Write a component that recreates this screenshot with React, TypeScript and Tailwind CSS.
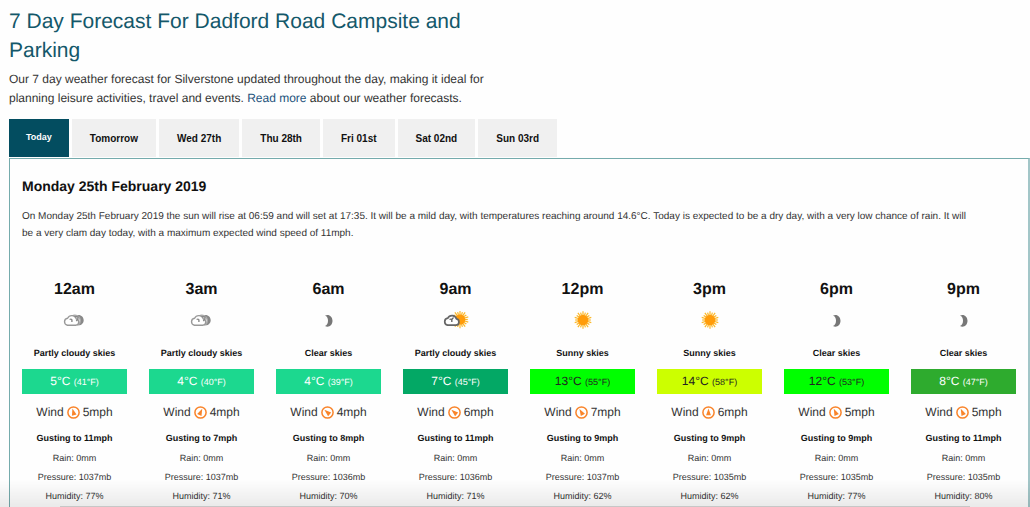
import React, { useState } from 'react';

type Sky = 'cloudNight' | 'moon' | 'cloudSun' | 'sun';

interface HourForecast {
  time: string;
  sky: Sky;
  summary: string;
  celsius: number;
  fahrenheit: number;
  tempClass: string;
  wind: number;
  windAngle: number;
  gust: number;
  pressure: number;
  humidity: number;
}

const tabs = ['Today', 'Tomorrow', 'Wed 27th', 'Thu 28th', 'Fri 01st', 'Sat 02nd', 'Sun 03rd'];

const hours: HourForecast[] = [
  { time: '12am', sky: 'cloudNight', summary: 'Partly cloudy skies', celsius: 5, fahrenheit: 41, tempClass: 'bg-[#1cd88f] text-white', wind: 5, windAngle: -15, gust: 11, pressure: 1037, humidity: 77 },
  { time: '3am', sky: 'cloudNight', summary: 'Partly cloudy skies', celsius: 4, fahrenheit: 40, tempClass: 'bg-[#1cd88f] text-white', wind: 4, windAngle: 25, gust: 7, pressure: 1037, humidity: 71 },
  { time: '6am', sky: 'moon', summary: 'Clear skies', celsius: 4, fahrenheit: 39, tempClass: 'bg-[#1cd88f] text-white', wind: 4, windAngle: -50, gust: 8, pressure: 1036, humidity: 70 },
  { time: '9am', sky: 'cloudSun', summary: 'Partly cloudy skies', celsius: 7, fahrenheit: 45, tempClass: 'bg-[#03a865] text-white', wind: 6, windAngle: -50, gust: 11, pressure: 1036, humidity: 71 },
  { time: '12pm', sky: 'sun', summary: 'Sunny skies', celsius: 13, fahrenheit: 55, tempClass: 'bg-[#00ff00] text-[#222]', wind: 7, windAngle: -30, gust: 9, pressure: 1037, humidity: 62 },
  { time: '3pm', sky: 'sun', summary: 'Sunny skies', celsius: 14, fahrenheit: 58, tempClass: 'bg-[#ccff00] text-[#222]', wind: 6, windAngle: 0, gust: 9, pressure: 1035, humidity: 62 },
  { time: '6pm', sky: 'moon', summary: 'Clear skies', celsius: 12, fahrenheit: 53, tempClass: 'bg-[#00ff00] text-[#222]', wind: 5, windAngle: -25, gust: 9, pressure: 1035, humidity: 77 },
  { time: '9pm', sky: 'moon', summary: 'Clear skies', celsius: 8, fahrenheit: 47, tempClass: 'bg-[#2eab2e] text-white', wind: 5, windAngle: -25, gust: 11, pressure: 1035, humidity: 80 },
];

const Sun: React.FC<{ cx: number; cy: number }> = ({ cx, cy }) => (
  <g>
    {Array.from({ length: 20 }, (_, i) => (
      <line
        key={i}
        x1={cx}
        y1={cy - 5}
        x2={cx}
        y2={cy - (i % 2 ? 7.8 : 8.7)}
        stroke="#fbb829"
        strokeWidth="1.2"
        transform={`rotate(${i * 18} ${cx} ${cy})`}
      />
    ))}
    <circle cx={cx} cy={cy} r="5.3" fill="#ff9c0a" />
  </g>
);

const cloudPath =
  'M4.6 14.2h8.3a3.2 3.2 0 0 0 .6-6.3 4.7 4.7 0 0 0-8.7-.7 3.55 3.55 0 0 0-.2 7z';

const SkyIcon: React.FC<{ sky: Sky }> = ({ sky }) => (
  <svg width="26" height="18" viewBox="0 0 26 18" aria-hidden="true">
    {sky === 'sun' && <Sun cx={13} cy={9} />}
    {sky === 'moon' && <path d="M9 4.5C12.800 2.6 16.500 5.4 16.500 9.8S12.800 17 9 15.1C13 13.6 13 6 9 4.5z" fill="#777" />}
    {sky === 'cloudSun' && (
      <>
        <Sun cx={17} cy={8.5} />
        <path d={cloudPath} fill="#fff" stroke="#666" strokeWidth="1.7" />
        <path d="M6.5 8.500c1-.6 1.800-.4 2.300.3V11M9 8.500c.2-1 .8-1.600 1.800-1.600" fill="none" stroke="#666" strokeWidth="1.4" />
      </>
    )}
    {sky === 'cloudNight' && (
      <>
        <path d="M15 4.2c3.7-1 6.7 1.8 6.7 5s-3 6-6.7 4.8c3.5-2 3.5-7.800 0-9.800z" fill="#888" />
        <path d="M10 5c3.500-2.200 8.300.3 8.300 4.700 0 2.200-1.400 3.900-3 4.500" fill="#fff" stroke="#aaa" strokeWidth="1.3" />
        <path d={cloudPath} transform="translate(.8 0)" fill="#fff" stroke="#999" strokeWidth="1.4" />
        <path d="M7.600 8.500c1-.6 1.800-.4 2.300.3V11M12.500 5.500l3.500.3c.3 2-.5 3.200-1.800 4" fill="none" stroke="#888" strokeWidth="1.4" />
      </>
    )}
  </svg>
);

const WindIcon: React.FC<{ angle: number }> = ({ angle }) => (
  <svg width="13" height="13" viewBox="0 0 13 13" aria-hidden="true">
    <circle cx="6.5" cy="6.5" r="5.6" fill="none" stroke="#f9842a" strokeWidth="1.5" />
    <path d="M6.5 2.4 8.9 9.3H4.1z" fill="#f9842a" transform={`rotate(${angle} 6.5 6.5)`} />
  </svg>
);

const HourColumn: React.FC<{ hour: HourForecast }> = ({ hour }) => (
  <li className="flex flex-col items-center whitespace-nowrap text-[9px] leading-[19px]">
    <h3 className="text-[16px] leading-5 font-bold text-[#111]">{hour.time}</h3>
    <div className="mt-[11px]">
      <SkyIcon sky={hour.sky} />
    </div>
    <p className="mt-[15px] leading-[18px] font-bold text-[#111]">{hour.summary}</p>
    <p className={`mt-[7px] h-[25px] w-full text-center text-[12px] leading-[25px] ${hour.tempClass}`}>
      {hour.celsius}°C <span className="text-[9px]">({hour.fahrenheit}°F)</span>
    </p>
    <p className="mt-2 flex items-center gap-[3px] text-[12px] leading-5">
      Wind <WindIcon angle={hour.windAngle} /> {hour.wind}mph
    </p>
    <p className="mt-[7px] mb-px font-bold text-[#111]">Gusting to {hour.gust}mph</p>
    <p>Rain: 0mm</p>
    <p>Pressure: {hour.pressure}mb</p>
    <p>Humidity: {hour.humidity}%</p>
  </li>
);

const App: React.FC = () => {
  const [activeTab, setActiveTab] = useState('Today');

  return (
    <main className="h-screen overflow-hidden bg-[#fefefe] pt-[7px] pl-[9px] font-['Liberation_Sans',Arial,sans-serif] text-[#333] [text-rendering:geometricPrecision]">
      <header className="max-w-[480px]">
        <h1 className="text-[21px] leading-[29px] text-[#14586a]">
          7 Day Forecast For Dadford Road Campsite and Parking
        </h1>
        <p className="mt-[5px] text-[12px] leading-[19px]">
          Our 7 day weather forecast for Silverstone updated throughout the day, making it ideal for
          planning leisure activities, travel and events.{' '}
          <a href="#about" className="text-[#23527c]">Read more</a> about our weather forecasts.
        </p>
      </header>

      <div role="tablist" className="mt-[11px] mb-px flex gap-[3px]">
        {tabs.map((tab) => (
          <button
            key={tab}
            type="button"
            role="tab"
            aria-selected={activeTab === tab}
            onClick={() => setActiveTab(tab)}
            className={`h-[38px] cursor-pointer font-bold ${
              activeTab === tab
                ? 'bg-[#034d60] px-[17px] text-[9px] text-white'
                : 'bg-[#f0f0f0] px-[18px] text-[10px] text-[#111]'
            }`}
          >
            {tab}
          </button>
        ))}
      </div>

      <section className="border border-r-2 border-[#75abac] border-r-[#a3c6c8] px-3 pt-[17px]">
        <h2 className="text-[14px] leading-5 font-bold text-[#111]">Monday 25th February 2019</h2>
        <p className="mt-3 text-[10px] leading-[17px]">
          On Monday 25th February 2019 the sun will rise at 06:59 and will set at 17:35. It will be a mild day, with
          temperatures reaching around 14.6°C. Today is expected to be a dry day, with a very low chance of rain. It
          will
          <br />
          be a very clam day today, with a maximum expected wind speed of 11mph.
        </p>
        <ul className="mt-[38px] grid grid-cols-8 gap-[22px] pb-6">
          {hours.map((hour) => (
            <HourColumn key={hour.time} hour={hour} />
          ))}
        </ul>
      </section>

      {/* Shade along the bottom edge of the window */}
      <div className="pointer-events-none fixed inset-x-0 bottom-0 h-7 bg-linear-to-b from-transparent to-black/8 px-[60px] pt-[27px]">
        <div className="h-px bg-black/15" />
      </div>
    </main>
  );
};

export default App;
